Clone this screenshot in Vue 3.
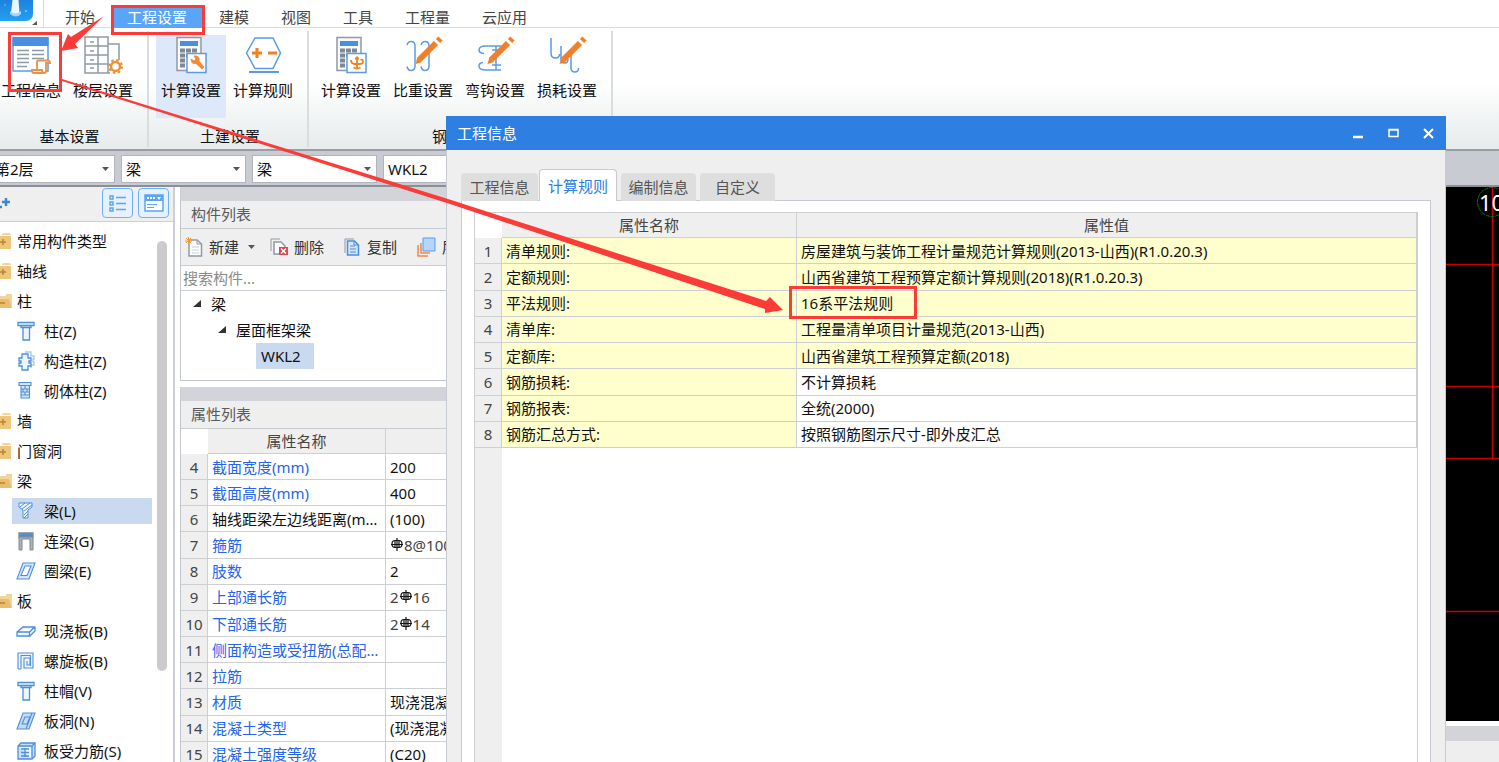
<script setup>
import { ref } from 'vue'

const menuTabs = ['开始', '工程设置', '建模', '视图', '工具', '工程量', '云应用']
const activeMenu = ref('工程设置')

const ribbonGroups = [
  { title: '基本设置', size: 'basic', items: [{ icon: 'info', label: '工程信息' }, { icon: 'floor', label: '楼层设置' }] },
  { title: '土建设置', size: 'civil', items: [{ icon: 'calc', label: '计算设置', on: true }, { icon: 'rule', label: '计算规则' }] },
  {
    title: '钢筋设置', size: 'rebar', items: [
      { icon: 'rebarCalc', label: '计算设置' }, { icon: 'weight', label: '比重设置' },
      { icon: 'hook', label: '弯钩设置' }, { icon: 'loss', label: '损耗设置' },
    ],
  },
]

const selectors = [
  { name: '楼层', value: '第2层', cls: 'floor' },
  { name: '构件大类', value: '梁', cls: 'kind' },
  { name: '构件类型', value: '梁', cls: 'kind' },
  { name: '构件', value: 'WKL2', cls: 'kind' },
]

const nav = [
  { t: '常用构件类型', folder: 'closed' },
  { t: '轴线', folder: 'closed' },
  { t: '柱', folder: 'open' },
  { t: '柱(Z)', icon: 'column' },
  { t: '构造柱(Z)', icon: 'tie' },
  { t: '砌体柱(Z)', icon: 'brick' },
  { t: '墙', folder: 'closed' },
  { t: '门窗洞', folder: 'closed' },
  { t: '梁', folder: 'open' },
  { t: '梁(L)', icon: 'beam', on: true },
  { t: '连梁(G)', icon: 'link' },
  { t: '圈梁(E)', icon: 'ring' },
  { t: '板', folder: 'open' },
  { t: '现浇板(B)', icon: 'slab' },
  { t: '螺旋板(B)', icon: 'spiral' },
  { t: '柱帽(V)', icon: 'column' },
  { t: '板洞(N)', icon: 'hole' },
  { t: '板受力筋(S)', icon: 'mesh' },
]

const props = [
  { n: 4, k: '截面宽度(mm)', v: '200' },
  { n: 5, k: '截面高度(mm)', v: '400' },
  { n: 6, k: '轴线距梁左边线距离(mm)', v: '(100)', plain: true },
  { n: 7, k: '箍筋', bar: ['', '8@100/200(2)'] },
  { n: 8, k: '肢数', v: '2' },
  { n: 9, k: '上部通长筋', bar: ['2', '16'] },
  { n: 10, k: '下部通长筋', bar: ['2', '14'] },
  { n: 11, k: '侧面构造或受扭筋(总配筋值)', v: '' },
  { n: 12, k: '拉筋', v: '' },
  { n: 13, k: '材质', v: '现浇混凝土' },
  { n: 14, k: '混凝土类型', v: '(现浇混凝土)' },
  { n: 15, k: '混凝土强度等级', v: '(C20)' },
]

const dialogTabs = ['工程信息', '计算规则', '编制信息', '自定义']
const activeTab = ref('计算规则')
const rules = [
  ['清单规则:', '房屋建筑与装饰工程计量规范计算规则(2013-山西)(R1.0.20.3)', true],
  ['定额规则:', '山西省建筑工程预算定额计算规则(2018)(R1.0.20.3)', true],
  ['平法规则:', '16系平法规则', true],
  ['清单库:', '工程量清单项目计量规范(2013-山西)', true],
  ['定额库:', '山西省建筑工程预算定额(2018)', true],
  ['钢筋损耗:', '不计算损耗', false],
  ['钢筋报表:', '全统(2000)', false],
  ['钢筋汇总方式:', '按照钢筋图示尺寸-即外皮汇总', false],
]
</script>

<template>
  <div class="app">
    <header class="menu">
      <div class="brand">
        <svg width="44" height="27" viewBox="0 0 44 27">
          <defs>
            <linearGradient id="lg" x1="0" y1="0" x2="0" y2="1">
              <stop offset="0" stop-color="#1565c8" /><stop offset="1" stop-color="#25a0f3" />
            </linearGradient>
          </defs>
          <rect x="-12" y="-20" width="45" height="41" rx="7" fill="url(#lg)" />
          <path d="M12.500 0h6l1 13q-.5 3-4 3t-4.500-3z" fill="#eaf6ff" />
          <path d="M10 11q5 5 11 0v3q-5 5-11 0z" fill="#9fd4fb" />
          <circle cx="26" cy="11" r="1" fill="#8cc8f8" /><circle cx="5" cy="5" r="1" fill="#5aaef5" />
          <path d="M37 21v4h-5z" fill="#555" />
        </svg>
      </div>
      <nav class="menu-tabs">
        <button v-for="m in menuTabs" :key="m" :class="{ on: m === activeMenu }" @click="activeMenu = m">{{ m }}</button>
      </nav>
    </header>

    <section class="ribbon">
      <div v-for="g in ribbonGroups" :key="g.title" class="group" :class="g.size">
        <div class="items">
          <button v-for="it in g.items" :key="it.icon" class="tool" :class="{ on: it.on }">
            <svg width="40" height="40" viewBox="0 0 40 40" fill="none" stroke-width="1.500">
              <template v-if="it.icon === 'info'">
                <rect x="2" y="3" width="35" height="33" fill="#fff" stroke="#5b9be6" />
                <rect x="1.500" y="2" width="36" height="9" fill="#4a8fe3" />
                <path d="M6 15.500h12M6 19.500h12M6 23.500h12M6 27.500h12M6 31.500h10M21 15.500h12M21 19.500h12M21 23.500h12" stroke="#8e9aa3" />
                <path d="M26 35V27q0-1.500 2-1.500h9q2 0 2 2.500h-4v8q0 2-2 2H23q-2 0-2-3h10q0 3 2 3" fill="#fff" stroke="#e8914a" stroke-width="1.800" />
              </template>
              <template v-else-if="it.icon === 'floor'">
                <path d="M2 2h13v36H2zM15 2h10v36H15zM2 11h23M2 20h23M2 29h23M25 9h11v16M7 7h4M7 16h4M7 25h4M7 33h4M25 38h2" stroke="#8e9aa3" />
                <circle cx="32.500" cy="31.500" r="4.500" stroke="#e8913a" stroke-width="2.500" />
                <circle cx="32.500" cy="31.500" r="6.500" stroke="#e8913a" stroke-width="2" stroke-dasharray="2.500 2.600" />
              </template>
              <template v-else-if="it.icon === 'calc' || it.icon === 'rebarCalc'">
                <rect x="6" y="2.500" width="24" height="33" fill="#fafafa" stroke="#8e9aa3" />
                <rect x="9" y="6" width="18" height="5" fill="#4a8fe3" />
                <path d="M9 15.500h5m1 0h5m1 0h5M9 20.500h5m1 0h5M9 25.500h5M9 30.500h5" stroke="#7d8a93" stroke-width="4" />
                <rect x="16" y="18.500" width="19" height="19" fill="#fff" stroke="#5b9be6" />
                <path v-if="it.icon === 'calc'" d="M20 24l3 2 2-2-2-3q4-1 5 2 .5 1.500 0 3l5 6-2 2-6-5.500q-5 1-5-4.500z" fill="#f08a35" stroke="#f08a35" stroke-width=".8" />
                <path v-else d="M26 21.500v13M24 23.500h4M20 25q0 4 4 4h4q4 0 4-2.500T29.500 25M22.500 32.500q3.500 2 7 0" stroke="#f08020" stroke-width="1.800" />
              </template>
              <template v-else-if="it.icon === 'rule'">
                <path d="M12 3h18l7.500 15L30 33.500H12L3.500 18z" fill="#fff" stroke="#5b9be6" />
                <path d="M6 37h30" stroke="#5b9be6" stroke-width="2" />
                <path d="M9 18h10M14 13v10M25 18h9" stroke="#f08020" stroke-width="3" />
              </template>
              <template v-else>
                <path v-if="it.icon === 'weight'" d="M4 10q1-3.500 4-3.500 4 0 4 4.500v20q0 4.500-4 4.500-3 0-4-4M18 10q1-3.500 4-3.500 4 0 4 4.500v20q0 4.500-4 4.500-3 0-4-4" stroke="#5b9be6" />
                <path v-else-if="it.icon === 'hook'" d="M26 11H11q-7 0-7 4 0 3 5 3.500M21 11v24M17 15h9M17 30h9M26 35H11q-7 0-7-4 0-3 4-3.500" stroke="#5b9be6" />
                <path v-else d="M4 3v15q0 5 4.500 5 4 0 4-4M14 11v13q0 4 4 4 3 0 3-4M24 18v15q0 4 4 4 3.500 0 3.500-4" stroke="#5b9be6" />
                <path d="M12.500 29l2-7 4.500 5z" fill="#f07f2b" />
                <path d="M16.500 24.500L33 8" stroke="#f07f2b" stroke-width="6" />
                <path d="M35 6l2.500-2.500" stroke="#f07f2b" stroke-width="6" />
              </template>
            </svg>
            <span>{{ it.label }}</span>
          </button>
        </div>
        <div class="group-title">{{ g.title }}</div>
      </div>
    </section>

    <section class="selectors">
      <label v-for="(s, i) in selectors" :key="i" class="pick" :class="s.cls">
        <select :aria-label="s.name"><option>{{ s.value }}</option></select>
        <svg width="7" height="4" viewBox="0 0 7 4"><path d="M0 0h7L3.500 4z" fill="#555" /></svg>
      </label>
    </section>

    <main class="work">
      <aside class="nav">
        <div class="nav-head">
          <svg class="plus" width="12" height="12" viewBox="0 0 12 12"><path d="M2 5h8M6 1v8M0 10h2" stroke="#3f86d9" stroke-width="2.500" /></svg>
          <button aria-label="列表视图">
            <svg width="18" height="18" viewBox="0 0 18 18" fill="none" stroke="#5aa5f5" stroke-width="1.500"><path d="M1 2h3v3H1zM1 8h3v3H1zM1 14h3v3H1zM7 3.500h10M7 9.500h10M7 15.500h10" /></svg>
          </button>
          <button aria-label="窗口视图">
            <svg width="20" height="18" viewBox="0 0 20 18"><path d="M1 1h18v16H1z" fill="#fff" stroke="#5aa5f5" stroke-width="1.500" /><path d="M1 1h18v6H1z" fill="#5aa5f5" /><path d="M3 4h2m1 0h2m1 0h2" stroke="#fff" stroke-width="2" /><path d="M13 3h4l-2 3z" fill="#fff" /><path d="M3 10.500h10M3 13.500h7" stroke="#5aa5f5" /></svg>
          </button>
        </div>
        <div class="nav-body">
          <ul>
            <li v-for="(r, i) in nav" :key="i" :class="{ child: r.icon, on: r.on }">
              <svg v-if="r.folder" class="folder" width="12" height="18" viewBox="0 0 12 18">
                <template v-if="r.folder === 'closed'">
                  <path d="M0 4h11v13H0z" fill="#eec57c" /><path d="M2 2.500q0-1.500 2-1.500h5q2 0 2 2H2z" fill="#f2d59d" /><path d="M0 10h6M3 7v6" stroke="#b8862f" stroke-width="1.500" />
                </template>
                <template v-else>
                  <path d="M0 4h6V2h6v14H0z" fill="#f2d59d" /><path d="M0 7h9l2.500 9H0z" fill="#e9bd6d" /><path d="M0 11h5" stroke="#b8862f" stroke-width="1.500" />
                </template>
              </svg>
              <svg v-else width="20" height="20" viewBox="0 0 20 20" fill="#eef5fd" stroke="#4c8fdc" stroke-width="1.300">
                <path v-if="r.icon === 'column'" d="M2 1.500h16v3h-3v2H5v-2H2zM7 6.500h6.500V19H7zM2 4.500h16" />
                <g v-else-if="r.icon === 'tie'"><path d="M9 1h6v4h3v3h-1v3h1v3h-3v3" fill="none" stroke="#a9c9ee" /><path d="M6 3h6v4h3v3h-2v2h2v3h-3v4H6v-4H3v-3h2v-2H3V7h3z" /></g>
                <path v-else-if="r.icon === 'brick'" d="M3 1.500h12v3H3zM5 4.500h8.500V17H5zM5 8h8.500M5 11h8.500M5 14h8.500M9 4.500V8M7 8v3M11 8v3M9 11v3" fill="#d4e6fb" stroke-width="1.100" />
                <path v-else-if="r.icon === 'beam'" d="M3 2h13v4l-4 3v8H7V9L3 6zM4 6l5-4M6 8l8-6M8 10l8-6M8 14l4-4M8 17l4-4" stroke-width="1" />
                <g v-else-if="r.icon === 'link'"><path d="M3 2h14v4H3z" fill="#4c8fdc" stroke="#7d8a93" /><path d="M3 6h14v13h-3V8H6v11H3z" fill="#aab4bd" stroke="#7d8a93" stroke-width="1" /></g>
                <path v-else-if="r.icon === 'ring'" d="M7 2h12l-6 16H1zM9 5h6l-4 9.500H5z" fill-rule="evenodd" fill="#d4e6fb" stroke-width="1.100" />
                <path v-else-if="r.icon === 'slab'" d="M1 11l6-5h12v4l-5 5H1zM1 11h12.500l5-5M13.500 11v4" />
                <path v-else-if="r.icon === 'spiral'" d="M2 18V2h15v15H8V7h6v7h-3v-4M5 18V4.500h9.500V15M2 18h3" stroke-width="1.100" />
                <path v-else-if="r.icon === 'hole'" d="M7 2h12l-6 16H1zM9 6h5l-3 7H6zM16 2L10 18" fill="#c3dbf7" stroke-width="1.100" />
                <g v-else><path d="M5 2h14v13l-3 3H2V5z" fill="#c9def8" /><path d="M2 5h14v13M16 5l3-3M5 8h8M5 11.500h8M5 15h8M9 7v9" /></g>
              </svg>
              <span>{{ r.t }}</span>
            </li>
          </ul>
          <div class="scroll"></div>
        </div>
      </aside>

      <div class="mid">
        <section class="panel list">
          <h2>构件列表</h2>
          <div class="bar">
            <button class="new">
              <svg width="18" height="20" viewBox="0 0 18 20" fill="none"><path d="M4 3h8l4.500 4v12H4z" fill="#fff" stroke="#8e9aa3" stroke-width="1.500" /><path d="M12 3v4h4.500" stroke="#8e9aa3" /><path d="M7 10h7M7 13h7M7 16h7" stroke="#c8ced4" /><path d="M0 4h7M3.500 0v7M1 1l5 5M6 1L1 6" stroke="#f29a38" /></svg>
              新建<svg class="caret" width="7" height="4" viewBox="0 0 7 4"><path d="M0 0h7L3.500 4z" fill="#555" /></svg>
            </button>
            <button>
              <svg width="18" height="20" viewBox="0 0 18 20" fill="none" stroke="#8e9aa3"><path d="M1 14V2h9" /><path d="M4 5h7l4 4v8H4z" fill="#fff" stroke-width="1.500" /><path d="M9 10h9v8H9z" fill="#d9484c" stroke="none" /><path d="M11 11.500l5 5M16 11.500l-5 5" stroke="#fff" stroke-width="1.500" /></svg>
              删除
            </button>
            <button>
              <svg width="18" height="20" viewBox="0 0 18 20" fill="none" stroke="#4c8fdc"><path d="M2 16V2h9" stroke="#8e9aa3" /><path d="M4.500 4h7l4 4v10h-11z" fill="#d4e6fb" stroke-width="1.500" /><path d="M11 4v4h4M7 9h5M7 12h6M7 15h6" /></svg>
              复制
            </button>
            <button>
              <svg width="20" height="20" viewBox="0 0 20 20" fill="none"><path d="M2 8v11h10M5 6v10h9" stroke="#ec8b4b" stroke-width="1.500" /><path d="M7 1h12v13H7z" fill="#b5d6fc" stroke="#5b9be6" /></svg>
              层间复制
            </button>
          </div>
          <input class="search" type="text" placeholder="搜索构件..." aria-label="搜索构件" />
          <ul class="tree">
            <li><svg width="8" height="8" viewBox="0 0 8 8"><path d="M8 0v7H0z" fill="#333" /></svg>梁</li>
            <li class="l2"><svg width="8" height="8" viewBox="0 0 8 8"><path d="M8 0v7H0z" fill="#333" /></svg>屋面框架梁</li>
            <li class="l3"><span>WKL2</span></li>
          </ul>
        </section>
        <section class="panel attrs">
          <h2>属性列表</h2>
          <table>
            <colgroup><col class="c-no" /><col class="c-name" /><col /></colgroup>
            <thead><tr><td class="corner"></td><th>属性名称</th><th>属性值</th></tr></thead>
            <tbody>
              <tr v-for="p in props" :key="p.n">
                <th scope="row">{{ p.n }}</th>
                <td class="key" :class="{ plain: p.plain }">{{ p.k }}</td>
                <td v-if="p.bar" class="steel">{{ p.bar[0] }}<svg width="12" height="13" viewBox="0 0 12 13" fill="none" stroke="#111" stroke-width="1.200"><path d="M6 0v13M4 2.500h4q3 0 3 3.500T8 9.500H4Q1 9.500 1 6t3-3.500zM0 6.500h12M4 2.500v7M8 2.500v7" /></svg>{{ p.bar[1] }}</td>
                <td v-else>{{ p.v }}</td>
              </tr>
            </tbody>
          </table>
        </section>
      </div>

      <div class="stage">
        <div class="cad">
          <svg width="54" height="534" viewBox="0 0 54 534" fill="none">
            <path d="M0 77.500h54M0 199.500h54M0 271.500h54M0 424.500h54M47.500 0v271" stroke="#c80000" stroke-width="1.500" />
            <circle cx="47" cy="15" r="14.500" stroke="#0a7a0a" stroke-dasharray="4 1" />
            <text x="34" y="24" fill="#fff" font-size="22">10</text>
          </svg>
        </div>
        <div class="foot"></div>
      </div>
    </main>

    <div class="dialog" role="dialog" aria-label="工程信息">
      <div class="title">
        <span>工程信息</span>
        <button aria-label="最小化"><svg width="11" height="11" viewBox="0 0 11 11"><path d="M0 9h10" stroke="#fff" stroke-width="2.500" /></svg></button>
        <button aria-label="最大化"><svg width="11" height="11" viewBox="0 0 11 11"><path d="M1 1.500h9v7H1zM1 2h9" fill="none" stroke="#fff" stroke-width="1.500" /></svg></button>
        <button aria-label="关闭"><svg width="11" height="11" viewBox="0 0 11 11"><path d="M1 1l9 9M10 1l-9 9" stroke="#fff" stroke-width="2" /></svg></button>
      </div>
      <div class="tabs" role="tablist">
        <button v-for="t in dialogTabs" :key="t" role="tab" :aria-selected="t === activeTab" :class="{ on: t === activeTab }" @click="activeTab = t">{{ t }}</button>
      </div>
      <div class="sheet">
        <div class="gridbox">
          <table>
            <colgroup><col class="c-no" /><col class="c-name" /><col /></colgroup>
            <thead><tr><td class="corner"></td><th>属性名称</th><th>属性值</th></tr></thead>
            <tbody>
              <tr v-for="(r, i) in rules" :key="i">
                <th scope="row">{{ i + 1 }}</th>
                <td class="hl">{{ r[0] }}</td>
                <td :class="{ hl: r[2] }">{{ r[1] }}</td>
              </tr>
            </tbody>
          </table>
          <div class="gutter"></div>
        </div>
      </div>
    </div>

    <svg class="marks" width="1499" height="762" viewBox="0 0 1499 762" fill="none">
      <g stroke="#fb3b38" stroke-width="3">
        <rect x="112.500" y="6.500" width="91" height="27" />
        <rect x="9.500" y="33.500" width="51" height="57" />
        <rect x="790.500" y="287.500" width="125" height="30" />
      </g>
      <path d="M104 16L71 37l-3-3-7 17 17-3-3-4zM62 79l386 120 318 102 4-4 13 13-18 3v-4L447 203 62 81z" fill="#fb3b38" />
    </svg>
  </div>
</template>

<style>
html, body { margin: 0; overflow: hidden; }
</style>

<style scoped>
.app {
  position: relative;
  display: flex;
  flex-direction: column;
  height: 100vh;
  overflow: hidden;
  background: #fff;
  color: #111;
  font: 15px/20px "Noto Sans", "Noto Sans CJK SC", sans-serif;
}
.app * { box-sizing: border-box; }
button { border: 0; padding: 0; background: none; font: inherit; color: inherit; white-space: nowrap; }
ul { list-style: none; margin: 0; padding: 0; }
svg { display: block; flex: none; }

.menu { display: flex; flex: none; height: 28px; border-bottom: 1px solid #dcdcdc; }
.brand { width: 44px; border-right: 1px solid #dcdcdc; overflow: hidden; }
.menu-tabs { display: flex; padding: 5px 0 0 5px; }
.menu-tabs button { height: 23px; padding: 0 16px; color: #444; }
.menu-tabs .on { background: #5aa5f7; color: #fff; }

.ribbon {
  display: flex;
  flex: none;
  height: 123px;
  padding-top: 3px;
  background: linear-gradient(#fff 45%, #e6ebeb);
  border-bottom: 2px solid #9a9ea4;
}
.group { display: flex; flex-direction: column; flex: none; height: 116px; border-right: 2px solid #dadddd; }
.basic { width: 149px; }
.civil { width: 160px; }
.rebar { width: 304px; }
.items { display: flex; gap: 2px; padding: 4px 0 0 7px; }
.basic .items { margin-left: -11px; }
.tool { display: flex; flex: none; flex-direction: column; align-items: center; width: 70px; height: 83px; gap: 5px; }
.tool.on { background: #dde9fa; }
.group-title { margin-top: 8px; text-align: center; }
.basic .group-title { padding-right: 8px; }
.civil .group-title, .rebar .group-title { padding-left: 4px; }

.selectors { display: flex; flex: none; gap: 6px; height: 36px; padding: 4px 0; background: #c8cbd1; border-bottom: 2px solid #8b9098; }
.pick { display: flex; flex: none; align-items: center; height: 28px; background: #fff; border: 1px solid #b1b5bb; }
.pick select { flex: 1; min-width: 0; height: 26px; border: 0; padding: 0 4px; appearance: none; background: none; font: inherit; color: inherit; }
.pick svg { margin-right: 5px; }
.floor { width: 121px; margin-left: -6px; }
.floor select { padding: 0; }
.kind { width: 125px; }

.work { display: flex; flex: 1; min-height: 0; }
.nav { display: flex; flex: none; flex-direction: column; width: 175px; border-right: 2px solid #cbd0d7; }
.nav-head { display: flex; flex: none; align-items: center; gap: 5px; height: 35px; padding: 0 4px 2px 0; background: #efefef; border-bottom: 1px solid #cdd0d4; }
.nav-head .plus { margin-right: auto; }
.nav-head button { display: grid; place-items: center; width: 31px; height: 30px; border: 1px solid #6eb0f7; border-radius: 4px; background: #e6f1fd; }
.nav-body { display: flex; flex: 1; min-height: 0; justify-content: space-between; padding-right: 6px; }
.nav-body ul { width: 152px; padding-top: 6px; }
.nav li { display: flex; align-items: center; height: 26px; margin-bottom: 4px; gap: 5px; white-space: nowrap; }
.nav .child { gap: 8px; margin-left: 12px; padding-left: 4px; }
.nav .on { background: #c9d9f0; }
.scroll { width: 10px; height: 430px; margin-top: 19px; border-radius: 5px; background: #cbcbcb; }

.mid { display: flex; flex: none; flex-direction: column; width: 520px; margin-left: 5px; gap: 6px; }
.panel { flex: none; border: 1px solid #c3c7ce; border-top: 14px solid #d3d4da; }
.panel h2 { margin: 0; height: 28px; padding-left: 10px; border-bottom: 1px solid #c9ccd0; background: #efefef; color: #5a5a5a; font-size: 15px; font-weight: 400; line-height: 27px; }
.bar { display: flex; align-items: center; height: 37px; padding-left: 4px; gap: 19px; background: #efefef; border-bottom: 1px solid #c9ccd0; overflow: hidden; color: #333; }
.bar button { display: flex; flex: none; align-items: center; gap: 6px; }
.bar .new { margin-right: -4px; }
.bar .caret { margin-left: 3px; }
.search { display: block; width: 100%; height: 25px; padding: 0 2px; border: 0; border-bottom: 1px solid #c9ccd0; font: inherit; outline: 0; }
.search::placeholder { color: #8a8a8a; opacity: 1; }
.tree { height: 89px; background: #fff; }
.tree li { display: flex; align-items: center; height: 26px; padding-left: 12px; gap: 10px; }
.tree .l2 { padding-left: 37px; }
.tree .l3 { padding-left: 75px; }
.tree span { width: 58px; padding: 3px 5px; background: #c9d9f0; }

table { width: 100%; table-layout: fixed; border-spacing: 0; }
td, th { height: 26px; padding: 0 4px; border-right: 1px solid #cdcfd3; border-bottom: 1px solid #cdcfd3; line-height: 20px; text-align: left; font-weight: 400; white-space: nowrap; overflow: hidden; text-overflow: ellipsis; }
th { background: #efefef; color: #444; text-align: center; }
thead td, thead th { height: 25px; }
.corner { background: #fff; border: 0; }
.attrs table { height: 339px; }
.attrs .c-no { width: 27px; }
.attrs .c-name { width: 178px; }
.attrs tbody th { padding: 0; }
.key { color: #2464f0; }
.key.plain { color: #111; }
.steel { color: #444; }
.steel svg { display: inline-block; margin: 0 1px; vertical-align: 0; }

.stage { display: flex; flex: 1; flex-direction: column; min-width: 0; }
.cad { display: flex; flex: none; justify-content: flex-end; height: 534px; background: #000; overflow: hidden; }
.foot { flex: 1; margin-top: 5px; border-top: 15px solid #d3d4da; background: #eee; }

.dialog {
  position: absolute;
  inset: 116px 53px 0 446px;
  display: flex;
  flex-direction: column;
  background: #efefef;
  border-right: 1px solid #c5cad3;
  border-left: 1px solid #c5cad3;
}
.title { display: flex; flex: none; align-items: center; gap: 24px; height: 34px; margin: 0 -1px; padding: 0 12px 0 11px; background: #2d80e2; color: #fff; }
.title span { flex: 1; }
.tabs { display: flex; flex: none; align-items: flex-end; gap: 4px; height: 51px; padding-left: 14px; z-index: 1; }
.tabs button { width: 75px; height: 28px; border-radius: 4px 4px 0 0; background: #dedede; color: #555; }
.tabs button:first-child { width: 77px; margin-right: -3px; }
.tabs .on { width: 78px; height: 32px; border: 1px solid #c5cad3; border-bottom: 0; background: #fff; color: #2d80e2; }
.sheet { display: flex; flex: 1; margin: -1px 14px 0; padding: 11px 12px 0; border: 1px solid #c5cad3; border-bottom: 0; background: #fff; }
.gridbox { display: flex; flex: 1; flex-direction: column; border: 1px solid #cdcfd3; border-bottom: 0; }
.gridbox table { height: 235px; }
.gridbox .c-no { width: 27px; }
.gridbox .c-name { width: 295px; }
.gridbox .hl { background: #ffffcd; }
.gutter { flex: 1; width: 27px; background: #efefef; }

.marks { position: absolute; top: 0; left: 0; pointer-events: none; }
</style>
